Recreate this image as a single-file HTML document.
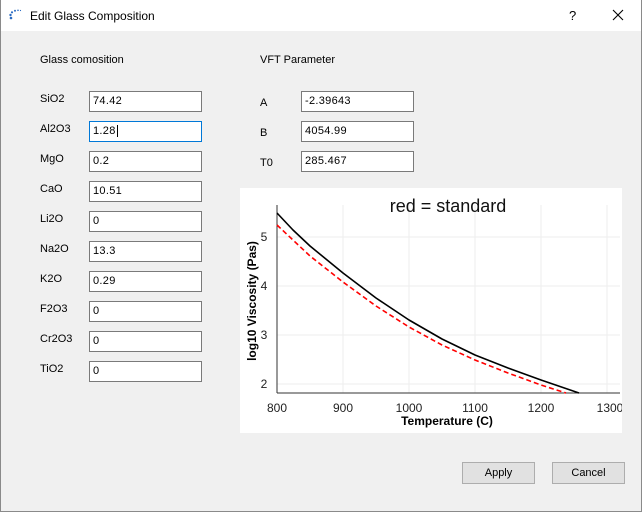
<!DOCTYPE html>
<html><head><style>
*{margin:0;padding:0;box-sizing:border-box}
body{width:642px;height:512px;background:#f0f0f0;font-family:"Liberation Sans",sans-serif;font-size:11px;color:#000;position:relative;overflow:hidden}
.tb{position:absolute;left:0;top:0;width:642px;height:31px;background:#fff}
.frame{position:absolute;left:0;top:0;width:642px;height:512px;border:1px solid #8a8a8a;border-top:none}
.t{position:absolute;font-size:12px}
.l{position:absolute;font-size:11px}
.i{position:absolute;width:113px;height:21px;background:#fff;border:1px solid #7a7a7a;padding:3px 0 0 3px;font-size:11px;letter-spacing:0.3px}
.btn{position:absolute;width:73px;height:22px;background:#e1e1e1;border:1px solid #adadad;text-align:center;line-height:20px;font-size:11px}
</style></head><body>
<div class="tb"></div>
<svg style="position:absolute;left:8px;top:8px" width="14" height="14"><g fill="#2a6bc2"><circle cx="3" cy="10" r="1.3"/><circle cx="2.5" cy="7" r="1.2"/><circle cx="4" cy="4.3" r="1.1"/><circle cx="7" cy="2.8" r="1"/><circle cx="10" cy="2.3" r="0.8"/><circle cx="12.5" cy="2.5" r="0.6"/></g></svg>
<div class="t" style="left:30px;top:9px">Edit Glass Composition</div>
<div class="t" style="left:569px;top:8px;font-size:13px">?</div>
<svg style="position:absolute;left:612px;top:9px" width="12" height="12"><path d="M1 1L11 11M11 1L1 11" stroke="#000" stroke-width="1.1"/></svg>
<div class="frame"></div>

<div class="l" style="left:40px;top:54px">Glass comosition</div>
<div class="l" style="left:260px;top:54px">VFT Parameter</div>

<div class="l" style="left:40px;top:93px">SiO2</div><div class="i" style="left:89px;top:91px">74.42</div>
<div class="l" style="left:40px;top:123px">Al2O3</div><div class="i" style="left:89px;top:121px;border-color:#0078d7">1.28<span style="border-left:1px solid #000;margin-left:1px"></span></div>
<div class="l" style="left:40px;top:153px">MgO</div><div class="i" style="left:89px;top:151px">0.2</div>
<div class="l" style="left:40px;top:183px">CaO</div><div class="i" style="left:89px;top:181px">10.51</div>
<div class="l" style="left:40px;top:213px">Li2O</div><div class="i" style="left:89px;top:211px">0</div>
<div class="l" style="left:40px;top:243px">Na2O</div><div class="i" style="left:89px;top:241px">13.3</div>
<div class="l" style="left:40px;top:273px">K2O</div><div class="i" style="left:89px;top:271px">0.29</div>
<div class="l" style="left:40px;top:303px">F2O3</div><div class="i" style="left:89px;top:301px">0</div>
<div class="l" style="left:40px;top:333px">Cr2O3</div><div class="i" style="left:89px;top:331px">0</div>
<div class="l" style="left:40px;top:363px">TiO2</div><div class="i" style="left:89px;top:361px">0</div>

<div class="l" style="left:260px;top:97px">A</div><div class="i" style="left:301px;top:91px">-2.39643</div>
<div class="l" style="left:260px;top:127px">B</div><div class="i" style="left:301px;top:121px">4054.99</div>
<div class="l" style="left:260px;top:157px">T0</div><div class="i" style="left:301px;top:151px">285.467</div>

<svg style="position:absolute;left:240px;top:188px" width="382" height="245" viewBox="240 188 382 245">
<rect x="240" y="188" width="382" height="245" fill="#fff"/>
<g stroke="#eeeeee" stroke-width="1">
<line x1="343" y1="205" x2="343" y2="393"/><line x1="409" y1="205" x2="409" y2="393"/><line x1="475" y1="205" x2="475" y2="393"/><line x1="541" y1="205" x2="541" y2="393"/><line x1="607" y1="205" x2="607" y2="393"/>
<line x1="277" y1="237" x2="620" y2="237"/><line x1="277" y1="286" x2="620" y2="286"/><line x1="277" y1="335" x2="620" y2="335"/><line x1="277" y1="384" x2="620" y2="384"/>
</g>
<path d="M277 393H620M277 205V393" stroke="#333" stroke-width="1" fill="none"/>
<polyline points="277,213 293,230 310,246 343,273 376,298 409,320 442,339 475,355 508,368 541,380 579,393" stroke="#000" stroke-width="1.6" fill="none" stroke-linejoin="round"/>
<polyline points="277,225 310,256 343,282 376,306 409,327 442,345 475,360 508,373 541,385 566,393" stroke="#f00" stroke-width="1.6" fill="none" stroke-dasharray="5 3"/>
<g font-family="Liberation Sans,sans-serif" font-size="12" fill="#222" text-anchor="middle">
<text x="277" y="412">800</text><text x="343" y="412">900</text><text x="409" y="412">1000</text><text x="475" y="412">1100</text><text x="541" y="412">1200</text><text x="610" y="412">1300</text>
<text x="264" y="241">5</text><text x="264" y="290">4</text><text x="264" y="339">3</text><text x="264" y="388">2</text>
</g>
<text x="448" y="212" font-family="Liberation Sans,sans-serif" font-size="18" text-anchor="middle" fill="#111">red = standard</text>
<text x="447" y="425" font-family="Liberation Sans,sans-serif" font-size="12" font-weight="bold" text-anchor="middle">Temperature (C)</text>
<text x="0" y="0" transform="translate(256,301) rotate(-90)" font-family="Liberation Sans,sans-serif" font-size="12" font-weight="bold" text-anchor="middle">log10 Viscosity (Pas)</text>
</svg>

<div class="btn" style="left:462px;top:462px">Apply</div>
<div class="btn" style="left:552px;top:462px">Cancel</div>
</body></html>
